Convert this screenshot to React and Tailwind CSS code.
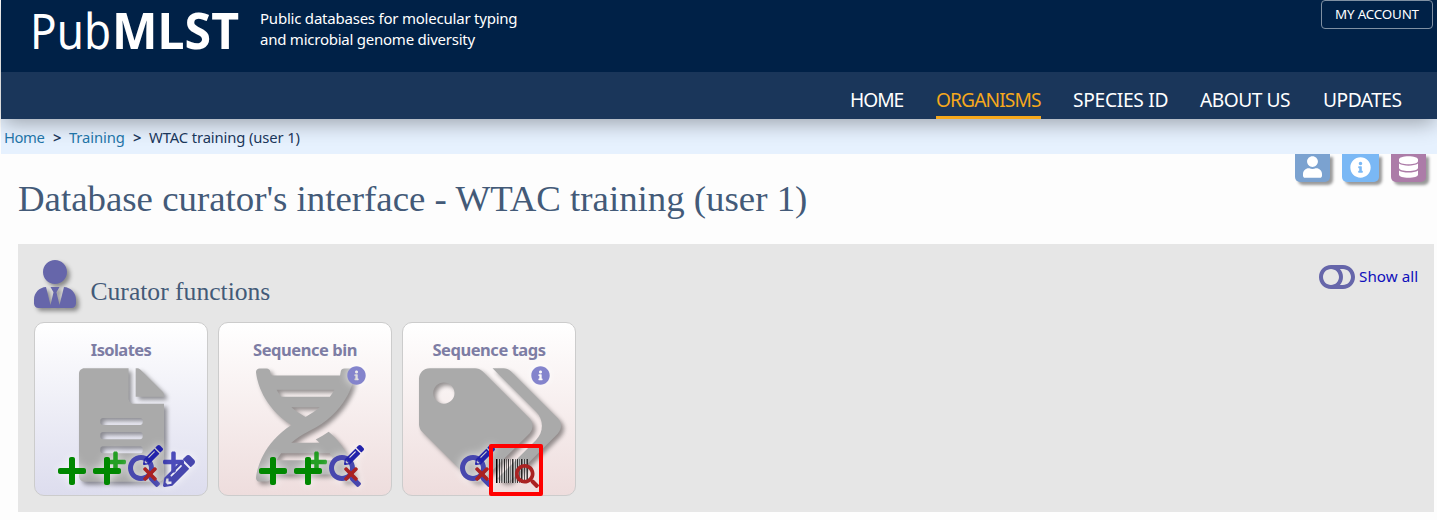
import React from "react";
import {
  FaUser, FaUserTie, FaInfoCircle, FaDatabase, FaToggleOff, FaFileAlt, FaDna,
  FaTags, FaPlus, FaSearch, FaPencilAlt, FaTimes,
} from "react-icons/fa";

const GLOW = "[filter:drop-shadow(0_0_3px_#ffffff44)_drop-shadow(0_0_5px_#ffffff99)]";
const SHADOW = "[filter:drop-shadow(3px_3px_2px_#00000066)]";

function NavItem({ children, active, className }) {
  return (
    <a className={`whitespace-nowrap h-[31px] leading-[24px] text-[19.2px] ${active ? "text-[#f5a81c] border-b-[3px] border-[#f5a81c]" : "text-white"} ${className}`}>
      {children}
    </a>
  );
}

function TopButton({ children, className }) {
  return (
    <div className={`h-[28px] pb-[2px] rounded-b-[5px] flex justify-center items-center text-white text-[21px] shadow-[3px_3px_3px_#00000066] ${className}`}>
      {children}
    </div>
  );
}

function Add() {
  return <FaPlus className={`w-[28px] h-[32px] text-[#008800] ${GLOW}`} />;
}

function BatchAdd() {
  return (
    <div className={`relative w-[28px] h-[32px] ${GLOW}`}>
      <FaPlus className="absolute left-[12px] -top-[5px] w-[21px] h-[24px] text-[#119911] opacity-90" />
      <FaPlus className="absolute left-0 top-0 w-[28px] h-[32px] text-[#008800]" />
    </div>
  );
}

function Query() {
  return (
    <div className={`relative w-[32px] h-[32px] ${GLOW}`}>
      <FaSearch className="w-[32px] h-[32px] text-[#4747ae]" />
      <FaPencilAlt className="absolute left-[15px] -top-[10px] w-[20px] h-[20px] text-[#2222aa]" />
      <FaTimes className="absolute left-[15px] top-[9px] w-[14px] h-[20px] text-[#aa2222]" />
    </div>
  );
}

function BatchEdit() {
  return (
    <div className={`relative w-[32px] h-[32px] ${GLOW}`}>
      <FaPlus className="absolute left-0 -top-[5px] w-[21px] h-[24px] text-[#2222aa] opacity-80" />
      <FaPencilAlt className="absolute left-0 top-0 w-[32px] h-[32px] text-[#4747ae]" />
    </div>
  );
}

const BARS = [
  [0, 1, 1], [1, 1, 0.5], [3, 1, 0.75], [5, 1, 0.5], [6, 1, 0.2], [8, 1, 0.8], [10, 1, 0.5], [12, 1, 0.75],
  [14, 1, 0.35], [16, 1, 0.8], [17, 1, 0.4], [19, 1, 0.5], [21, 1, 0.75], [23, 1, 0.45], [25, 1, 0.8],
  [26, 1, 0.4], [28, 1, 0.65], [30, 1, 0.4], [31, 1, 0.75],
];

function Scan() {
  return (
    <div className="relative w-[44px] h-[32px]">
      <svg className="absolute left-0 top-[4px] w-[32px] h-[24px]" viewBox="0 0 32 24" shapeRendering="crispEdges">
        <rect width="32" height="24" fill="#fff" opacity="0.25" />
        {BARS.map(([x, w, o]) => <rect key={x} x={x} y="0" width={w} height="24" fill="#000" opacity={o} />)}
      </svg>
      <FaSearch className="absolute left-[19px] top-[9px] w-[24px] h-[24px] text-[#aa2222]" />
      <div className="absolute -left-[7px] -top-[11px] w-[54px] h-[52px] border-4 border-[#ff0000] rounded-[2px]" />
    </div>
  );
}

function Card({ title, titleClass, tint, info, picture, children, rowClass }) {
  return (
    <div className={`relative w-[174px] h-[174px] rounded-[10px] border border-[#cccccc] bg-linear-to-b from-white ${tint}`}>
      <h3 className={`pt-[16px] text-center leading-[21px] text-[16.5px] font-bold text-[#7d7da4] ${titleClass}`}>{title}</h3>
      {picture}
      {info && <FaInfoCircle className={`absolute left-[128px] top-[43px] w-[19px] h-[19px] text-[#8484cc] ${GLOW}`} />}
      <div className={`absolute top-[132px] flex ${rowClass}`}>{children}</div>
    </div>
  );
}

export default function App() {
  return (
    <div className="w-[1437px] h-[520px] overflow-hidden bg-[#fdfdfd] pl-px font-['Noto_Sans','Open_Sans',sans-serif]">
      <header className="relative z-10 shadow-[0_6px_20px_-2px_#00000055]">
        <div className="h-[72px] bg-[#002147] flex items-start justify-between pl-[30px] pr-[4px]">
          <div className="flex">
            <svg className="w-[212px] h-[72px] fill-white overflow-visible" viewBox="0 0 212 72">
              <text x="-1" y="49" fontSize="49" textLength="81" lengthAdjust="spacingAndGlyphs" fontWeight="400">Pub</text>
              <text x="81" y="49" fontSize="51" textLength="127" lengthAdjust="spacingAndGlyphs" fontWeight="700">MLST</text>
            </svg>
            <p className="ml-[17px] mt-[8px] whitespace-nowrap text-white text-[15px] leading-[21px]">
              <span className="block tracking-[-0.22px]">Public databases for molecular typing</span>
              <span className="block tracking-[-0.24px]">and microbial genome diversity</span>
            </p>
          </div>
          <button className="w-[112px] h-[29px] pb-[1px] rounded-[4px] border border-[#7f90a3] text-white text-[13.4px] tracking-[-0.2px] leading-[24px] whitespace-nowrap">MY ACCOUNT</button>
        </div>
        <nav className="h-[47px] bg-[#1a365a] flex items-end justify-end pr-[35px]">
          <NavItem className="w-[54px] mr-[32px] tracking-[-1px]">HOME</NavItem>
          <NavItem active className="w-[105px] mr-[32px] tracking-[-0.9px]">ORGANISMS</NavItem>
          <NavItem className="w-[95px] mr-[32px] tracking-[-0.3px]">SPECIES ID</NavItem>
          <NavItem className="w-[90px] mr-[33px] tracking-[-0.5px]">ABOUT US</NavItem>
          <NavItem className="w-[79px] tracking-[-0.5px]">UPDATES</NavItem>
        </nav>
      </header>
      <div className="h-[35px] bg-[#e6f1fe]">
        <div className="relative z-20 flex pl-[3px] pt-[7px] text-[14.8px] leading-[22px] tracking-[-0.12px] whitespace-nowrap text-[#1a365a]">
          <a className="w-[49px] tracking-[-0.4px] text-[#1f74a6]">Home</a>
          <span className="w-[16px] font-semibold">&gt;</span>
          <a className="w-[64px] text-[#1f74a6]">Training</a>
          <span className="w-[16px] font-semibold">&gt;</span>
          <span>WTAC training (user 1)</span>
        </div>
      </div>
      <main className="pl-[17px] pr-[3px]">
        <div className="flex justify-between h-[90px]">
          <h1 className="pt-[22px] whitespace-nowrap font-['Liberation_Serif',serif] text-[36.85px] leading-[46px] text-[#435a78]">Database curator's interface - WTAC training (user 1)</h1>
          <div className="flex mr-[8px]">
            <TopButton className="w-[35px] mr-[12px] bg-[#7ba2d0]"><FaUser className="w-[19px] h-[22px]" /></TopButton>
            <TopButton className="w-[37px] mr-[12px] bg-[#7ab8f5]"><FaInfoCircle /></TopButton>
            <TopButton className="w-[35px] bg-[#ac7ca8]"><FaDatabase className="w-[19px] h-[22px]" /></TopButton>
          </div>
        </div>
        <section className="h-[268px] bg-[#e6e6e6] px-[16px] pt-[16px]">
          <div className="flex h-[62px] justify-between items-start">
            <div className="flex">
              <FaUserTie className={`w-[42px] h-[48px] text-[#6666aa] ${SHADOW}`} />
              <h2 className="ml-[14.5px] mt-[16px] whitespace-nowrap font-['Liberation_Serif',serif] text-[25.6px] leading-[32px] text-[#435a78]">Curator functions</h2>
            </div>
            <a className="flex items-center mt-[1px] text-[#0f0fbb] whitespace-nowrap">
              <FaToggleOff className="w-[36px] h-[32px] text-[#6666aa] mr-[4px]" />
              <span className="w-[59px] pb-[2px] text-[15.2px] tracking-[0.05px]">Show all</span>
            </a>
          </div>
          <div className="flex gap-[10px]">
            <Card title="Isolates" titleClass="tracking-[-0.6px]" tint="to-[#ddddee]" rowClass="left-[22.5px] gap-[7px]"
              picture={<FaFileAlt className={`absolute left-[44px] top-[45px] w-[85px] h-[114px] text-[#aaaaaa] ${SHADOW}`} />}>
              <Add /><BatchAdd /><Query />
              <div className="-ml-[4px]"><BatchEdit /></div>
            </Card>
            <Card title="Sequence bin" titleClass="tracking-[-0.45px]" info tint="to-[#eedddd]" rowClass="left-[40px] gap-[7px]"
              picture={<FaDna className={`absolute left-[37px] top-[45px] w-[99px] h-[114px] text-[#aaaaaa] ${SHADOW}`} />}>
              <Add /><BatchAdd /><Query />
            </Card>
            <Card title="Sequence tags" titleClass="tracking-[-0.45px]" info tint="to-[#eedddd]" rowClass="left-[57px] gap-[4px]"
              picture={<FaTags className={`absolute left-[16px] top-[45px] w-[142px] h-[114px] text-[#aaaaaa] ${SHADOW}`} />}>
              <Query /><Scan />
            </Card>
          </div>
        </section>
      </main>
    </div>
  );
}
